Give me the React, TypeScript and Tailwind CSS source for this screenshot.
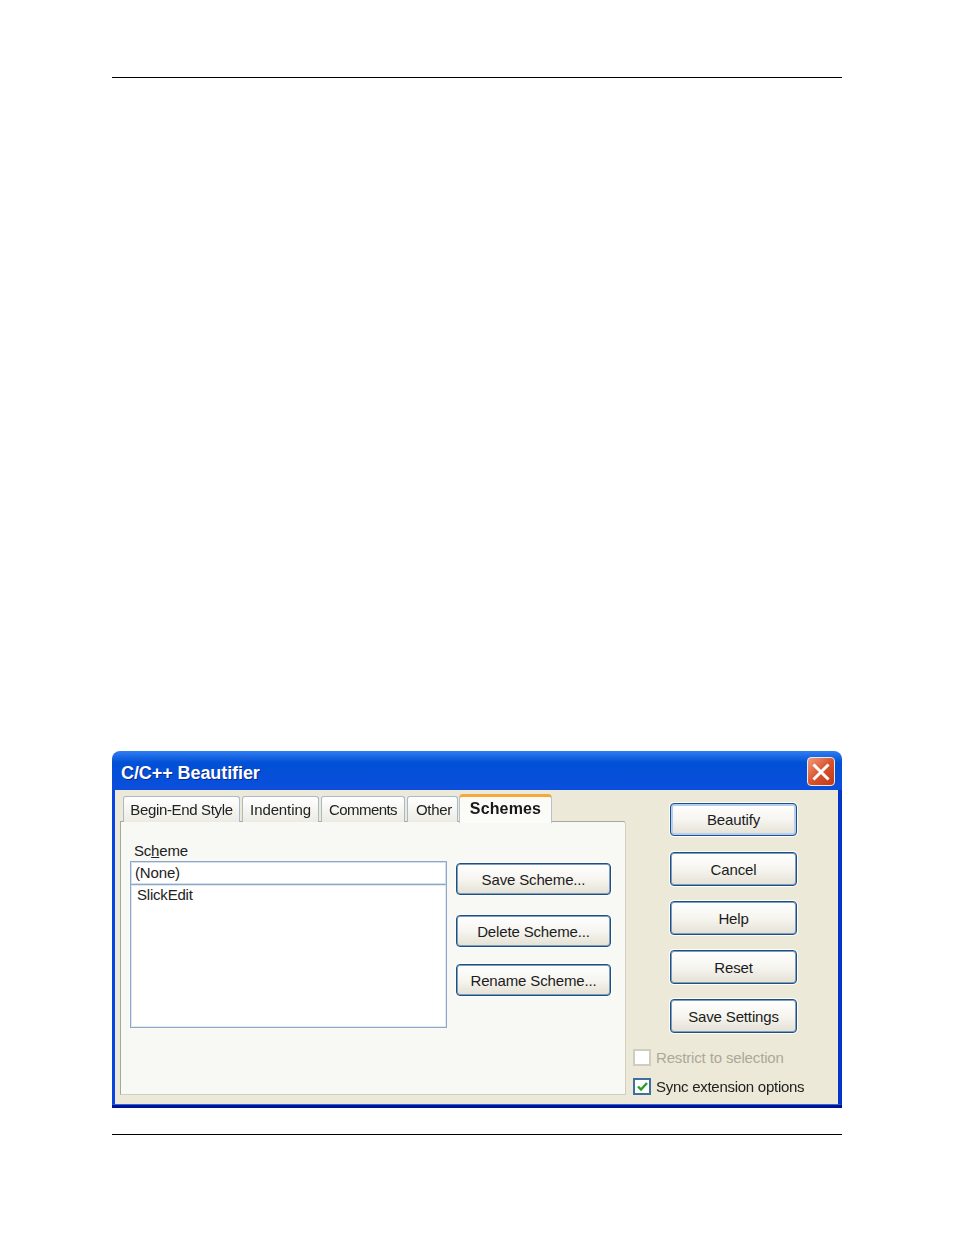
import React from "react";

const font = "font-['Liberation_Sans','Arial',sans-serif]";

function Tab({ label, width, track }: { label: string; width: string; track: string }) {
  return (
    <div className={`${width} ${track} h-[26px] mr-[2px] flex items-center justify-center rounded-t-[3px] border border-b-0 border-[#a9b9c9] bg-gradient-to-b from-white to-[#ecebe3] text-[15px] leading-none text-[#222] pb-px`}>
      {label}
    </div>
  );
}

function Btn({ label, h = "h-[34px]", def = false, w = "w-[127px]" }: { label: string; h?: string; def?: boolean; w?: string }) {
  return (
    <div className={`${w} ${h} flex items-center justify-center rounded-[4px] border border-[#1d4f82] bg-gradient-to-b from-white via-[#f6f5f0] to-[#e4e1d4] text-[15px] leading-none tracking-[-0.15px] text-[#1c1c1c] ${def ? "shadow-[inset_0_0_0_2px_#b5cdf0,inset_0_0_0_1px_#4d7bb0,0_0_0_1px_#ffffff]" : "shadow-[inset_0_0_0_1px_#7f9dbd,0_0_0_1px_#ffffff]"}`}>
      {label}
    </div>
  );
}

export default function App() {
  return (
    <div className={`w-[954px] h-[1235px] bg-white px-[112px] pt-[77px] ${font}`}>
      <div className="h-px bg-black" />
      <div className="mt-[673px] h-[357px] flex flex-col rounded-t-[8px] overflow-hidden blur-[0.45px]">
        <div className="h-[39px] shrink-0 flex items-center justify-between pl-[9px] pr-[7px] bg-gradient-to-b from-[#2f7df2] via-[#0150d6] via-30% to-[#0a4fdc]">
          <span className="mt-[4px] font-bold text-[18px] leading-none tracking-[-0.08px] text-white [text-shadow:1px_1px_0_#0a2a90]">
            C/C++ Beautifier
          </span>
          <div className="mt-[2px] w-[28px] h-[29px] rounded-[4px] border border-[#f0e8e4] bg-gradient-to-br from-[#eb9c80] via-[#d9532c] to-[#c0381a] flex items-center justify-center">
            <svg width="20" height="20" viewBox="0 0 20 20" fill="none">
              <path d="M3.5 3.5 L16.5 16.5 M16.5 3.5 L3.5 16.5" stroke="#fff" strokeWidth="3" strokeLinecap="square" />
            </svg>
          </div>
        </div>
        <div className="flex-1 flex border-l-[3px] border-r-[4px] border-b border-l-[#0845e0] border-r-[#0336c4] border-b-[#2a6ae8] bg-[#ece9d8]">
          <div className="pl-[5px] w-[511px] shrink-0">
            <div className="h-[32px] flex items-end pl-[3px] relative z-10">
              <Tab label="Begin-End Style" width="w-[117px]" track="tracking-[-0.35px]" />
              <Tab label="Indenting" width="w-[77px]" track="tracking-[-0.1px]" />
              <Tab label="Comments" width="w-[84px]" track="tracking-[-0.55px]" />
              <div className="w-[51px] h-[26px] mr-px pl-[3px] pb-px flex items-center justify-center rounded-t-[3px] border border-b-0 border-[#a9b9c9] bg-gradient-to-b from-white to-[#ecebe3] text-[15px] leading-none tracking-[-0.3px] text-[#222]">
                Other
              </div>
              <div className="w-[93px] h-[29px] rounded-t-[4px] border-t-[3px] border-x border-t-[#f5a93a] border-x-[#b8c2cc] bg-[#fbfbf8] flex items-center justify-center font-bold text-[16px] leading-none tracking-[0.15px] text-[#181818] -mb-px pb-[3px]">
                Schemes
              </div>
            </div>
            <div className="w-[506px] h-[274px] -mt-px rounded-tr-[3px] border border-[#a7a79e] border-b-[#d0cec0] border-r-[#d0cec0] bg-[#f8f8f5] pl-[9px] pt-[19px] flex">
              <div className="w-[317px]">
                <div className="h-[20px] pl-[4px] pb-[2px] flex items-center text-[15px] leading-none tracking-[-0.2px] text-[#222]">
                  <span>Sc<u>h</u>eme</span>
                </div>
                <div className="h-[24px] border border-[#8fa8c8] shadow-[inset_0_0_0_1px_#d3deeb] bg-white pl-[4px] pb-[2px] flex items-center text-[15px] leading-none tracking-[-0.15px] text-[#222]">
                  (None)
                </div>
                <div className="h-[144px] -mt-px border border-[#8fa8c8] shadow-[inset_0_0_0_1px_#e0e8f1] bg-white pl-[6px] text-[15px] leading-[20px] tracking-[-0.2px] text-[#222]">
                  SlickEdit
                </div>
              </div>
              <div className="ml-[9px] pt-[22px] flex flex-col">
                <Btn label="Save Scheme..." h="h-[32px]" w="w-[155px]" />
                <div className="mt-[20px]"><Btn label="Delete Scheme..." h="h-[32px]" w="w-[155px]" /></div>
                <div className="mt-[17px]"><Btn label="Rename Scheme..." h="h-[32px]" w="w-[155px]" /></div>
              </div>
            </div>
          </div>
          <div className="flex-1 pl-[7px] pt-[13px]">
            <div className="pl-[37px] flex flex-col gap-[15px]">
              <div className="mb-px"><Btn label="Beautify" def h="h-[33px]" /></div>
              <Btn label="Cancel" />
              <Btn label="Help" />
              <Btn label="Reset" />
              <Btn label="Save Settings" />
            </div>
            <div className="mt-[16px] flex items-center h-[17px] gap-[5px] text-[15px] leading-none tracking-[-0.15px] text-[#aca899]">
              <div className="w-[18px] h-[17px] border-2 border-[#cfcdbf] bg-white" />
              <span>Restrict to selection</span>
            </div>
            <div className="mt-[12px] flex items-center h-[17px] gap-[5px] text-[15px] leading-none tracking-[-0.27px] text-[#222]">
              <div className="w-[18px] h-[17px] border-2 border-[#3d6f9f] bg-white flex items-center justify-center">
                <svg width="13" height="13" viewBox="0 0 13 13" fill="none">
                  <path d="M2 6.5 L5 9.5 L11 3" stroke="#21a121" strokeWidth="2.4" />
                </svg>
              </div>
              <span>Sync extension options</span>
            </div>
          </div>
        </div>
        <div className="h-[3px] shrink-0 bg-[#00138f]" />
      </div>
      <div className="mt-[26px] h-px bg-black" />
    </div>
  );
}
